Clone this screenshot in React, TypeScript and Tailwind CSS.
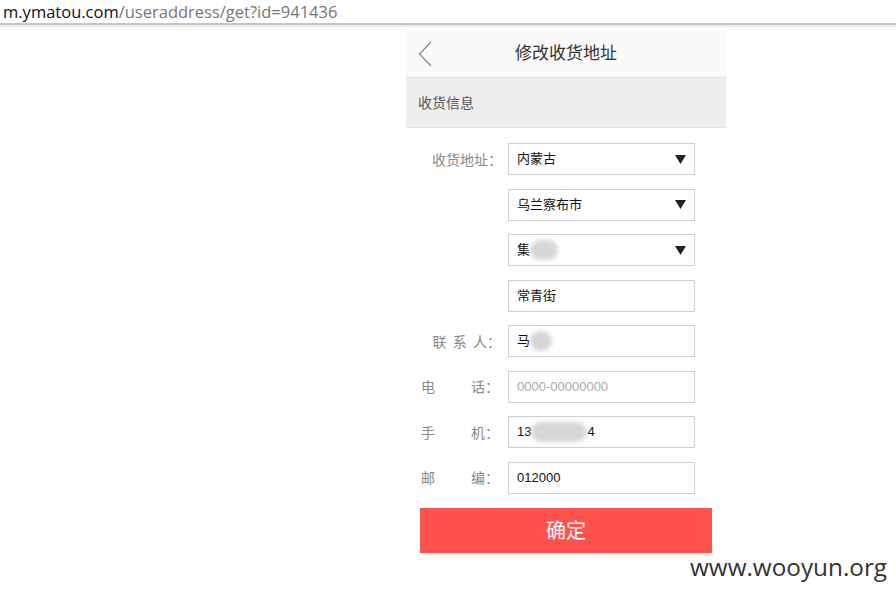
import React from "react";

const cjk = { fontFamily: '"Microsoft YaHei", "Noto Sans CJK SC", sans-serif' };

type Row = {
  label: React.ReactNode;
  value?: React.ReactNode;
  select?: boolean;
  placeholder?: string;
};

function Blob({ w, h = 20 }: { w: number; h?: number }) {
  return (
    <span
      className="inline-block rounded-full bg-[#d6d6d6] blur-[2px]"
      style={{ width: w, height: h }}
    />
  );
}

function Spread({ chars }: { chars: string[] }) {
  return (
    <span className="flex w-full justify-between">
      {chars.map((c, i) => (
        <span key={i}>{c}</span>
      ))}
    </span>
  );
}

const rows: Row[] = [
  { label: <span className="mr-[-3px]">收货地址：</span>, value: "内蒙古", select: true },
  { label: null, value: "乌兰察布市", select: true },
  {
    label: null,
    value: (
      <span className="flex items-center">
        集<Blob w={28} />
      </span>
    ),
    select: true,
  },
  { label: null, value: "常青街" },
  {
    label: (
      <span className="mr-[-2px] whitespace-nowrap">
        联&nbsp;&nbsp;系&nbsp;&nbsp;人：
      </span>
    ),
    value: (
      <span className="flex items-center">
        马<Blob w={22} />
      </span>
    ),
  },
  { label: <Spread chars={["电", "话："]} />, placeholder: "0000-00000000" },
  {
    label: <Spread chars={["手", "机："]} />,
    value: (
      <span className="flex items-center">
        13<Blob w={56} />4
      </span>
    ),
  },
  { label: <Spread chars={["邮", "编："]} />, value: "012000" },
];

export default function App() {
  return (
    <div className="relative h-[594px] w-[896px] overflow-hidden bg-white">
      <div className="h-[23px] pl-[3px] text-[16.5px] leading-[23px] text-[#777]" style={{ fontFamily: '"Open Sans", "Noto Sans", sans-serif' }}>
        <span className="text-[#111]">m.ymatou.com</span>/useraddress/get?id=941436
      </div>
      <div className="h-[2px] bg-[#c6c6c6]" />
      <div className="h-[2px] bg-[#ebebeb]" />

      <div className="ml-[406px] mt-[3px] w-[320px]" style={cjk}>
        <div className="relative flex h-[48px] items-center justify-center border-b border-[#e0e0e0] bg-[#fafafa]">
          <svg className="absolute left-[12px] top-[11px]" width="14" height="26" viewBox="0 0 14 26">
            <path d="M13 1 L1.5 13 L13 25" fill="none" stroke="#8a8a8a" strokeWidth="1.3" />
          </svg>
          <span className="-mt-[3px] text-[17px] text-[#333]">修改收货地址</span>
        </div>
        <div className="flex h-[50px] items-center border-b border-[#e2e2e2] bg-[#eeeeee] pl-[12px] text-[14px] text-[#555]">
          收货信息
        </div>

        <div className="flex flex-col gap-[13.5px] pt-[15px]">
          {rows.map((row, i) => (
            <div key={i} className="flex h-[32px] items-center">
              <div className="ml-[15px] flex w-[78px] shrink-0 justify-end text-[14px] text-[#888]">{row.label}</div>
              <div className="ml-[9px] flex h-[32px] w-[187px] items-center justify-between border border-[#cfcfcf] bg-white pl-[8px] pr-[8px] text-[13px] text-[#111]">
                {row.placeholder ? (
                  <span className="text-[#aaa]" style={{ fontFamily: '"Liberation Sans", Arial, sans-serif' }}>
                    {row.placeholder}
                  </span>
                ) : (
                  <span style={{ fontFamily: '"Liberation Sans", "Noto Sans CJK SC", sans-serif' }}>{row.value}</span>
                )}
                {row.select ? (
                  <svg width="11" height="9" viewBox="0 0 11 9">
                    <path d="M0 0 H11 L5.5 9 Z" fill="#222" />
                  </svg>
                ) : null}
              </div>
            </div>
          ))}
        </div>

        <div className="ml-[14px] mt-[14px] flex h-[45px] w-[292px] items-center justify-center bg-[#ff524d] text-[20px] text-white">
          确定
        </div>
      </div>

      <div
        className="absolute left-[690px] top-[549px] text-[24.3px] text-[#333]"
        style={{ fontFamily: '"Open Sans", "Noto Sans", sans-serif' }}
      >
        www.wooyun.org
      </div>
    </div>
  );
}
